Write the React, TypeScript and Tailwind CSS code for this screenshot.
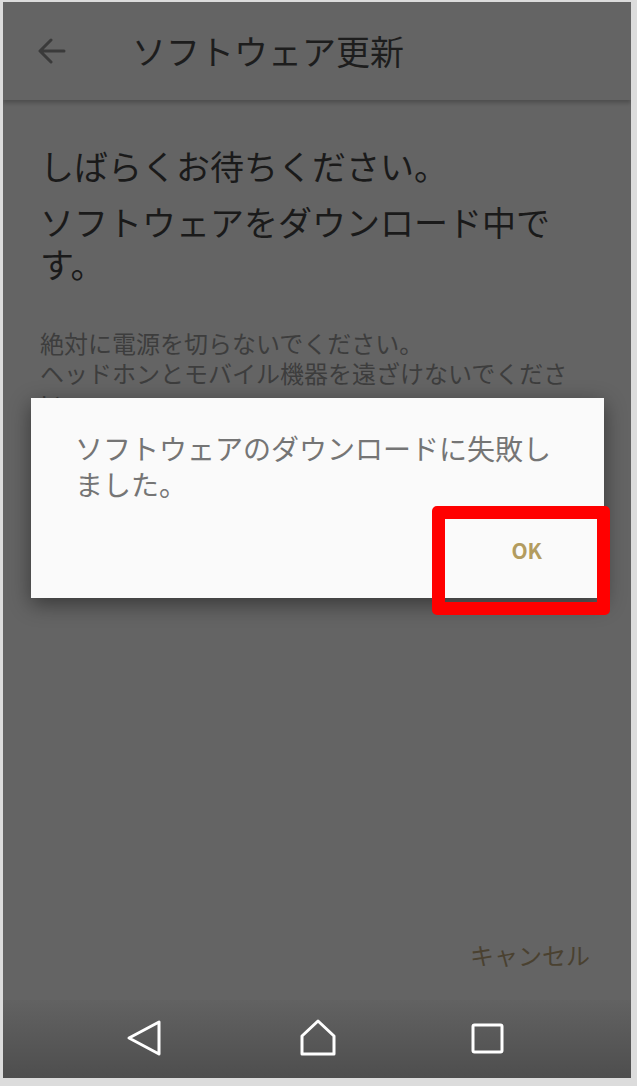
import React from "react";

const font = { fontFamily: '"Noto Sans CJK JP", "Noto Sans", sans-serif' };

const BackIcon = () => (
  <svg width="36" height="38" viewBox="0 0 36 38" fill="none">
    <path d="M33 3 L33 35 L3 19 Z" stroke="#fff" strokeWidth="3" strokeLinejoin="round" />
  </svg>
);

const HomeIcon = () => (
  <svg width="38" height="38" viewBox="0 0 38 38" fill="none">
    <path d="M3 17 L19 2 L35 17 L35 35 L3 35 Z" stroke="#fff" strokeWidth="3" strokeLinejoin="round" />
  </svg>
);

const RecentIcon = () => (
  <svg width="34" height="32" viewBox="0 0 34 32" fill="none">
    <rect x="2" y="2" width="29" height="27" rx="1.5" stroke="#fff" strokeWidth="3" />
  </svg>
);

const App: React.FC = () => {
  return (
    <div className="w-[637px] h-[1086px] bg-[#dcdcdc] pl-[3px] pt-[2px] pr-[6px] pb-[8px]" style={font}>
      <div className="relative h-full bg-[#646464] flex flex-col overflow-hidden">
        {/* app bar */}
        <div className="h-[98px] shrink-0 flex items-center bg-[#646464] shadow-[0_3px_4px_rgba(0,0,0,0.22)] z-10">
          <svg className="ml-[35px]" width="28" height="26" viewBox="0 0 28 26" fill="none">
            <path d="M26 13 H3 M13 2 L2 13 L13 24" stroke="#3a3a3a" strokeWidth="3" strokeLinecap="round" strokeLinejoin="round" />
          </svg>
          <h1 className="ml-[66px] text-[34px] leading-none text-[#1d1d1d]">ソフトウェア更新</h1>
        </div>

        {/* body */}
        <div className="flex-1 pl-[37px] pt-[45px]">
          <div className="w-[536px]">
            <p className="text-[34px] leading-[42px] text-[#1a1a1a]">しばらくお待ちください。</p>
            <p className="mt-[14px] text-[34px] leading-[42px] text-[#1a1a1a]">ソフトウェアをダウンロード中です。</p>
            <p className="mt-[43px] text-[24px] leading-[30px] text-[#3d3d3d]">
              絶対に電源を切らないでください。
              <br />
              ヘッドホンとモバイル機器を遠ざけないでください。
            </p>
          </div>
        </div>

        <div className="flex justify-end pr-[41px] mb-[30px]">
          <span className="text-[24px] leading-[30px] text-[#4a4130]">キャンセル</span>
        </div>

        {/* nav bar */}
        <div className="h-[78px] shrink-0 flex items-center bg-gradient-to-b from-[#626262] to-[#4e4e4e]">
          <div className="ml-[123px] mt-[-2px]"><BackIcon /></div>
          <div className="ml-[137px] mt-[-2px]"><HomeIcon /></div>
          <div className="ml-[134px]"><RecentIcon /></div>
        </div>

        {/* dialog */}
        <div className="absolute left-[28px] top-[396px] w-[573px] h-[200px] bg-[#fafafa] shadow-[0_6px_20px_rgba(0,0,0,0.45)] flex flex-col">
          <p className="pl-[44px] pr-[40px] pt-[32px] text-[28px] leading-[36px] text-[#757575]">
            ソフトウェアのダウンロードに失敗しました。
          </p>
          <div className="flex-1 flex items-center justify-end pr-[62px] pt-[2px]">
            <span className="text-[21px] font-bold text-[#b39c5f]">OK</span>
          </div>
        </div>

        {/* highlight */}
        <div className="absolute left-[429px] top-[504px] w-[178px] h-[109px] border-[13px] border-[#ff0000] rounded-[5px]" />
      </div>
    </div>
  );
};

export default App;
